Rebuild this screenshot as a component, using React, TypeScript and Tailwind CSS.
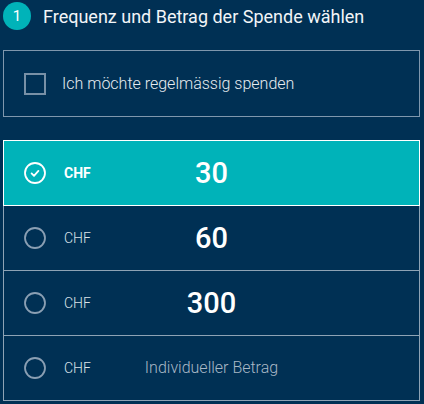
const options = [
  { amount: '30', selected: true },
  { amount: '60', selected: false },
  { amount: '300', selected: false },
  { amount: '', selected: false },
];

function Radio({ selected }: { selected: boolean }) {
  return (
    <svg width="22" height="22" viewBox="0 0 22 22" fill="none" className="shrink-0">
      <circle cx="11" cy="11" r="10" stroke={selected ? '#ffffff' : '#8a9fb3'} strokeWidth="1.8" />
      {selected && (
        <path d="M7.6 11.4l2.4 2.4 4.4-4.9" stroke="#ffffff" strokeWidth="1.8" strokeLinecap="round" strokeLinejoin="round" />
      )}
    </svg>
  );
}

export default function App() {
  return (
    <div className="w-[424px] h-[404px] bg-[#003054] text-white font-['Roboto',sans-serif] pl-[3px] pr-[4px] pt-[2px]">
      <div className="flex items-center gap-3 h-7">
        <span className="w-7 h-7 rounded-full bg-[#00b3b9] flex items-center justify-center text-[15px]">1</span>
        <h1 className="text-[18px] text-[#f2f5f8]">Frequenz und Betrag der Spende wählen</h1>
      </div>

      <label className="mt-5 h-[67px] border border-[#7f97ad] flex items-center gap-4 pl-5">
        <span className="w-[22px] h-[22px] border-2 border-[#7890a6] shrink-0" />
        <span className="font-light text-[16px] text-[#e6ecf1]">Ich möchte regelmässig spenden</span>
      </label>

      <div className="mt-[23px] border border-[#8ea3b5]">
        {options.map((o, i) => (
          <div
            key={i}
            className={
              o.selected
                ? 'relative z-10 -mx-px -mt-px -mb-px h-[66px] border border-white bg-[#00b3b9] grid grid-cols-[1fr_auto_1fr] items-center'
                : 'h-[65px] border-t border-[#8ea3b5] first:border-t-0 grid grid-cols-[1fr_auto_1fr] items-center'
            }
          >
            <div className="flex items-center gap-[18px] pl-5">
              <Radio selected={o.selected} />
              <span className={o.selected ? 'text-[14px] font-bold' : 'text-[14px] font-light text-[#dce3e9]'}>CHF</span>
            </div>
            {o.amount ? (
              <span className="text-[29px] font-medium leading-none">{o.amount}</span>
            ) : (
              <span className="text-[16px] font-light text-[#a9b8c6]">Individueller Betrag</span>
            )}
            <div />
          </div>
        ))}
      </div>
    </div>
  );
}
